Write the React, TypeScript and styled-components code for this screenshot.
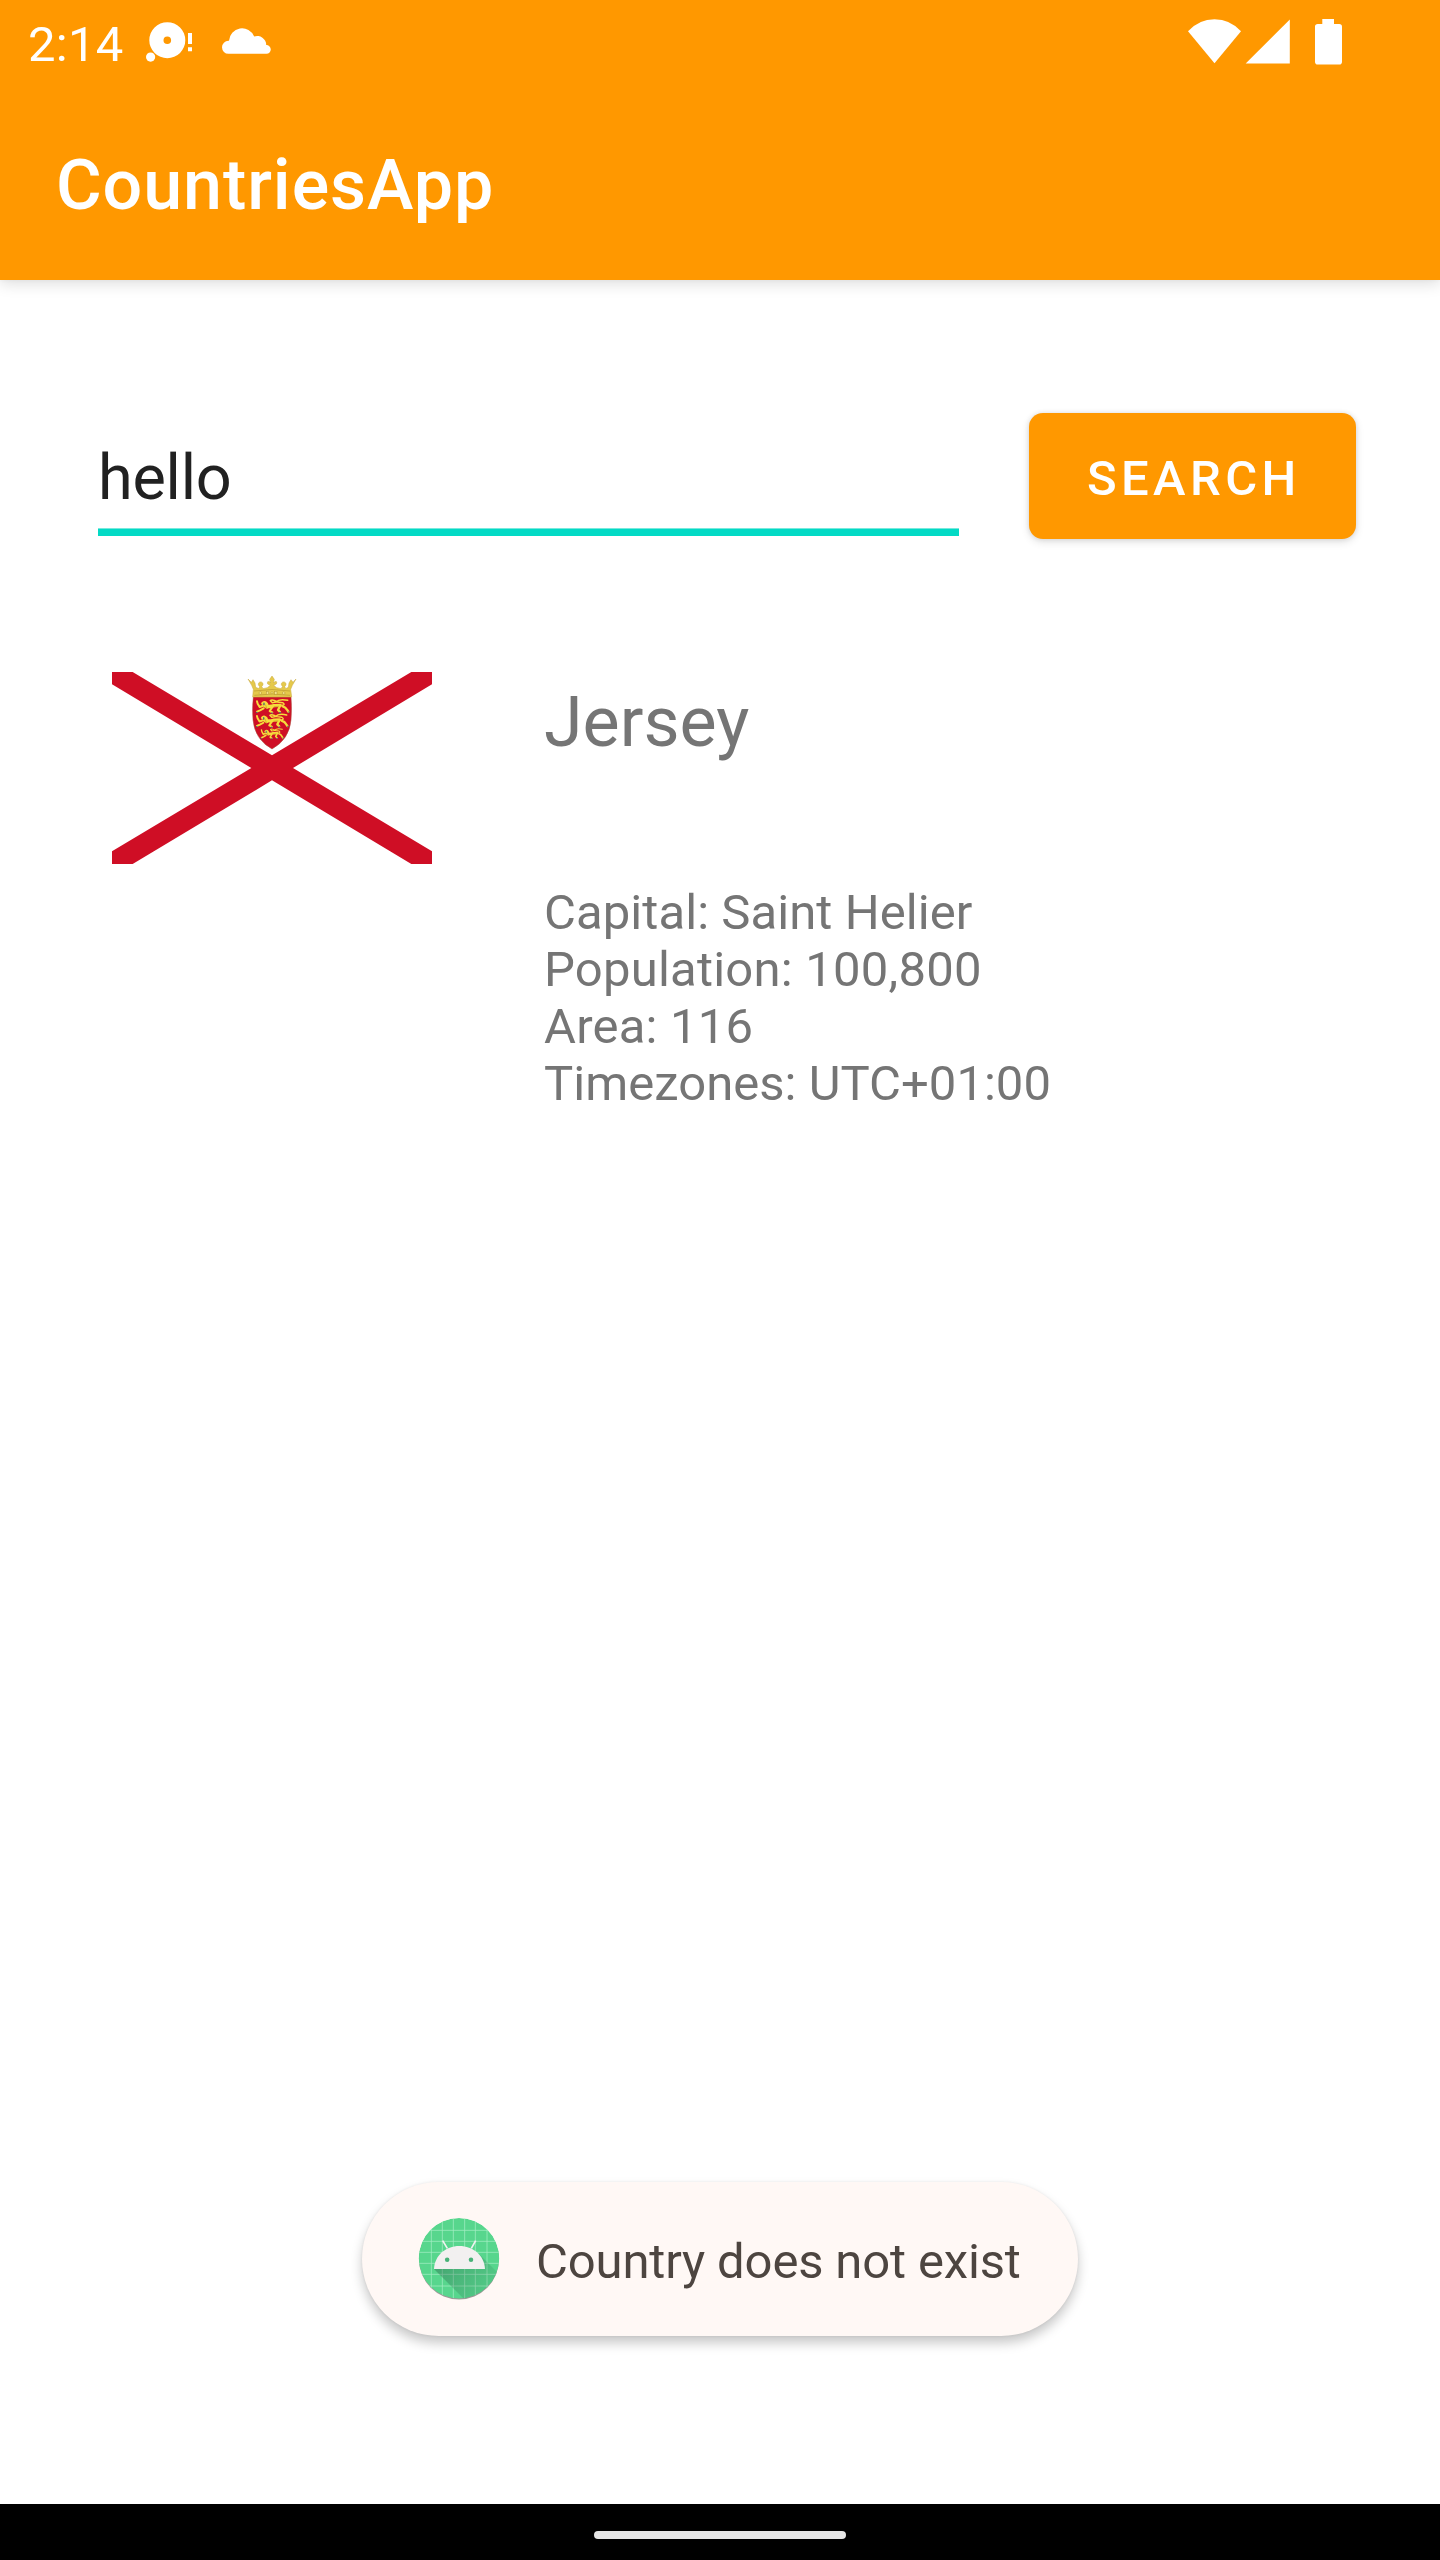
import React from "react";
import styled, { createGlobalStyle } from "styled-components";

const ORANGE = "#ff9800";

const GlobalStyle = createGlobalStyle`
  *, *::before, *::after { box-sizing: border-box; }
  body { margin: 0; background: #fff; }
`;

const Screen = styled.div`
  width: 1440px;
  height: 2560px;
  display: flex;
  flex-direction: column;
  background: #fff;
  font-family: Roboto, "Liberation Sans", sans-serif;
  overflow: hidden;
`;

const Header = styled.header`
  flex: none;
  height: 280px;
  display: flex;
  flex-direction: column;
  background: ${ORANGE};
  color: #fff;
  box-shadow: 0 4px 14px rgba(0, 0, 0, 0.13), 0 0 4px rgba(0, 0, 0, 0.04);
`;

const StatusBar = styled.div`
  height: 84px;
  padding: 0 98px 0 28px;
  display: flex;
  align-items: flex-start;
`;

const Clock = styled.span`
  width: 118px;
  padding-top: 16px;
  font-size: 49px;
  line-height: 57px;
  letter-spacing: 0.25px;
`;

const StatusGlyphs = styled.svg`
  flex: none;
  height: 84px;
  fill: #fff;
`;

const Spacer = styled.div`
  flex: 1;
`;

const Toolbar = styled.div`
  height: 196px;
  padding: 6px 56px 0;
  display: flex;
  align-items: center;
`;

const AppTitle = styled.h1`
  margin: 0;
  font-size: 70px;
  line-height: 82px;
  font-weight: 500;
  letter-spacing: 0.0131em;
`;

const Content = styled.main`
  flex: 1;
  display: flex;
  flex-direction: column;
`;

const SearchRow = styled.form`
  margin: 133px 84px 0 98px;
  height: 126px;
  display: flex;
  justify-content: space-between;
`;

const Field = styled.div`
  width: 861px;
  height: 123px;
  display: flex;
  flex-direction: column;
  justify-content: space-between;
  color: #212121;
  font-size: 63px;
  line-height: 74px;
  letter-spacing: -0.25px;
  padding-top: 28px;
`;

const Underline = styled.div`
  height: 8px;
  background: #03dac5;
  border-top: 1px solid #76e9dd;
`;

const SearchButton = styled.button`
  width: 327px;
  height: 126px;
  padding: 4px 0 0 58px;
  border: 0;
  border-radius: 14px;
  background: ${ORANGE};
  color: #fff;
  font: 500 49px/57px Roboto, "Liberation Sans", sans-serif;
  letter-spacing: 4.375px;
  text-align: left;
  box-shadow: 0 3px 8px rgba(0, 0, 0, 0.12), 0 0 5px rgba(0, 0, 0, 0.1);
`;

const CountryRow = styled.section`
  margin: 133px 112px 0;
  display: flex;
  gap: 112px;
`;

const Flag = styled.svg`
  flex: none;
  width: 320px;
  height: 192px;
`;

const CountryInfo = styled.div`
  padding-top: 9px;
  color: #757575;
`;

const CountryName = styled.h2`
  margin: 0 0 121px;
  font-size: 70px;
  line-height: 82px;
  font-weight: 400;
`;

const Detail = styled.div<{ $tracking: number }>`
  font-size: 49px;
  line-height: 57px;
  letter-spacing: ${(p) => p.$tracking}px;
  white-space: nowrap;
`;

const Toast = styled.div`
  align-self: center;
  width: 716px;
  height: 154px;
  margin: auto 0 168px;
  padding-left: 56px;
  display: flex;
  align-items: center;
  gap: 36px;
  border-radius: 77px;
  background: #fff8f5;
  color: #4d4540;
  font-size: 49px;
  line-height: 57px;
  letter-spacing: -0.15px;
  box-shadow: 0 7px 12px rgba(0, 0, 0, 0.22), 0 0 3px rgba(0, 0, 0, 0.07);
`;

const ToastIcon = styled.svg`
  flex: none;
  width: 82px;
  height: 84px;
`;

const ToastText = styled.span`
  padding-top: 5px;
  white-space: nowrap;
`;

const NavBar = styled.nav`
  flex: none;
  height: 56px;
  padding-top: 27px;
  display: flex;
  justify-content: center;
  background: #000;
`;

const HomeHandle = styled.div`
  width: 252px;
  height: 8px;
  border-radius: 4px;
  background: #e6e6e6;
`;

const details = [
  { text: "Capital: Saint Helier", tracking: 0.08 },
  { text: "Population: 100,800", tracking: 0.22 },
  { text: "Area: 116", tracking: 0.2 },
  { text: "Timezones: UTC+01:00", tracking: 0.03 },
];

function NotificationIcons() {
  return (
    <StatusGlyphs width={130} viewBox="146 0 130 84">
      <path
        fillRule="evenodd"
        d="M167.3 22.2a18 18 0 1 1 0 36a18 18 0 1 1 0-36ZM167.3 36.5a3.8 3.8 0 1 0 0 7.6a3.8 3.8 0 1 0 0-7.6Z"
      />
      <circle cx="150.6" cy="57.1" r="4.6" />
      <path d="M188 33h4v11h-4zM188 47.2h4v4h-4z" />
      <path d="M228.5 53.8a6.5 6.5 0 0 1 0-13H229A13.1 13.1 0 0 1 254.2 36.5A9 9 0 0 1 266.2 45A4.4 4.4 0 0 1 266.5 53.8Z" />
    </StatusGlyphs>
  );
}

function SystemIcons() {
  return (
    <StatusGlyphs width={156} viewBox="1186 0 156 84">
      <path d="M1188 31.2Q1199 19.2 1214.5 19.2T1241 31.2L1214.5 63.3Z" />
      <path d="M1289.8 19.5V63.6H1245.7Z" />
      <path d="M1322.3 19h11.7v5h5.2a2.8 2.8 0 0 1 2.8 2.8v35a2.8 2.8 0 0 1-2.8 2.8h-21.4a2.8 2.8 0 0 1-2.8-2.8v-35a2.8 2.8 0 0 1 2.8-2.8h4.5z" />
    </StatusGlyphs>
  );
}

function Lion() {
  return (
    <g stroke="#f6dc3c" fill="none" strokeLinecap="round" strokeLinejoin="round">
      <path d="M28 17Q42 22 56 17L75 16" strokeWidth="10" />
      <path d="M22 10Q29 4 34 12L35 22" strokeWidth="9" />
      <path d="M22 18L13 21L7 11L5 4" strokeWidth="6" />
      <path d="M25 25L14 31L5 35M50 23L43 33L51 37" strokeWidth="6" />
      <path d="M73 20L68 30L74 36M82 19Q91 21 95 29L99 35" strokeWidth="7" />
      <path d="M81 16Q91 14 82 8L66 6Q51 -3 45 2L51 8L62 6Q72 -5 97 1" strokeWidth="4.5" />
      <path d="M31 15L34 25M57 20L70 19" stroke="#b98d1f" strokeWidth="1.5" />
      <path d="M26 9v5M4 37h1M49 39h2M73 38h2M100 36h1" stroke="#315d83" strokeWidth="3.5" />
    </g>
  );
}

function JerseyFlag() {
  return (
    <Flag viewBox="36 36 960 576">
      <path
        fill="#cf0e25"
        d="M36 36H98L516 286L934 36H996V73L579 324L996 574V612H934L516 361L98 612H36V574L454 324L36 73Z"
      />
      <path
        fill="#cf0e25"
        stroke="#a54f39"
        strokeWidth="1.5"
        d="M460 111H573Q576 145 573 180Q568 238 516 267Q464 238 459 180Q456 145 460 111Z"
      />
      <path
        fill="#e5c94b"
        stroke="#c9a840"
        strokeWidth="1.5"
        d="M458 111L460 88L455 76L444 57L454 67L459 59L465 69L467 82L477 86L479 79A7 7 0 1 1 485 79L489 86L502 83L511 76L503 72Q500 62 509 65L512 69L509 58L516 48L523 58L520 69L524 65Q533 62 529 72L521 76L530 83L543 86L548 79A7 7 0 1 1 554 79L557 86L565 82L567 69L573 59L579 67L588 57L577 76L572 88L575 111Z"
      />
      <path d="M462 93Q516 84 570 93M463 106Q516 98 570 106" stroke="#b9972f" strokeWidth="2" fill="none" />
      <g fill="#f4e289" stroke="#b9972f" strokeWidth="1.5">
        <circle cx="481" cy="99" r="4" />
        <circle cx="551" cy="99" r="4" />
        <rect x="499" y="94" width="7" height="9" />
        <rect x="524" y="94" width="7" height="9" />
        <circle cx="516" cy="98" r="3" />
      </g>
      <g transform="translate(466 120)"><Lion /></g>
      <g transform="translate(466 164) scale(.97)"><Lion /></g>
      <g transform="translate(481 207) scale(.68 .75)"><Lion /></g>
    </Flag>
  );
}

function LauncherIcon() {
  return (
    <ToastIcon viewBox="39 36 246 252">
      <defs>
        <clipPath id="launcher-disc"><circle cx="162" cy="160" r="121" /></clipPath>
        <linearGradient id="launcher-shade" x1="110" y1="170" x2="240" y2="270" gradientUnits="userSpaceOnUse">
          <stop offset="0" stopColor="#285b46" stopOpacity=".38" />
          <stop offset="1" stopColor="#285b46" stopOpacity=".1" />
        </linearGradient>
        <filter id="launcher-blur"><feGaussianBlur stdDeviation="2" /></filter>
      </defs>
      <circle cx="162" cy="163.5" r="120" fill="#000" opacity=".38" filter="url(#launcher-blur)" />
      <g clipPath="url(#launcher-disc)">
        <circle cx="162" cy="160" r="121" fill="#57d68d" />
        <path
          d="M79 36V284M112 36V284M145 36V284M179 36V284M211 36V284M246 36V284M39 76H285M39 109H285M39 142H285M39 175H285M39 208H285M39 243H285"
          stroke="#a5edc4"
          strokeWidth="2.2"
        />
        <path d="M87 192L190 295H320V245L222 147Z" fill="url(#launcher-shade)" />
      </g>
      <path d="M113 107L127 130M212 107L199 130" stroke="#f2f2f1" strokeWidth="5" />
      <path d="M87 192C89 151 122 123 163 123S238 151 240 192Z" fill="#f2f0f0" />
      <circle cx="126.5" cy="164.5" r="6.8" fill="#47b277" />
      <circle cx="198" cy="164.5" r="6.8" fill="#47b277" />
    </ToastIcon>
  );
}

export default function App() {
  return (
    <>
      <GlobalStyle />
      <Screen>
        <Header>
          <StatusBar>
            <Clock>2:14</Clock>
            <NotificationIcons />
            <Spacer />
            <SystemIcons />
          </StatusBar>
          <Toolbar>
            <AppTitle>CountriesApp</AppTitle>
          </Toolbar>
        </Header>
        <Content>
          <SearchRow>
            <Field>
              <span>hello</span>
              <Underline />
            </Field>
            <SearchButton type="button">SEARCH</SearchButton>
          </SearchRow>
          <CountryRow>
            <JerseyFlag />
            <CountryInfo>
              <CountryName>Jersey</CountryName>
              {details.map((d) => (
                <Detail key={d.text} $tracking={d.tracking}>
                  {d.text}
                </Detail>
              ))}
            </CountryInfo>
          </CountryRow>
          <Toast role="status">
            <LauncherIcon />
            <ToastText>Country does not exist</ToastText>
          </Toast>
        </Content>
        <NavBar>
          <HomeHandle />
        </NavBar>
      </Screen>
    </>
  );
}
